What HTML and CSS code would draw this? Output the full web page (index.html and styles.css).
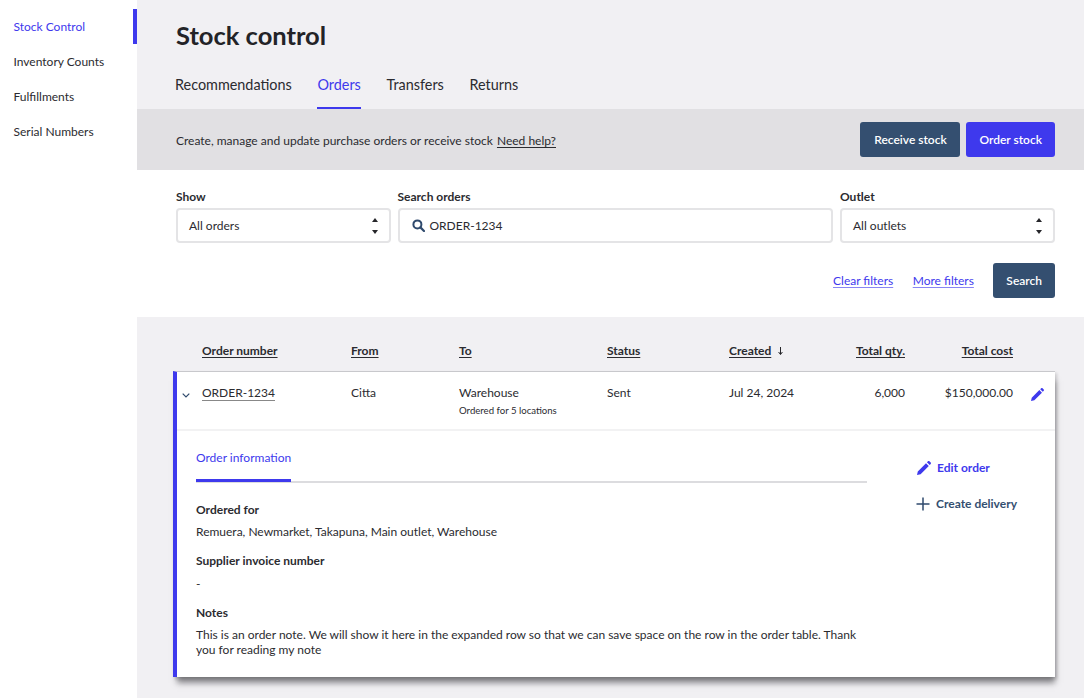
FILE: index.html
```html
<!DOCTYPE html>
<html lang="en">
<head>
<meta charset="utf-8">
<title>Stock control</title>
<link rel="stylesheet" href="styles.css">
</head>
<body>
<div class="app">
  <nav class="sidebar">
    <a class="side-link active">Stock Control</a>
    <a class="side-link">Inventory Counts</a>
    <a class="side-link">Fulfillments</a>
    <a class="side-link">Serial Numbers</a>
  </nav>
  <main class="main">
    <header class="header">
      <h1 class="title">Stock control</h1>
      <div class="tabs">
        <a class="tab">Recommendations</a>
        <a class="tab active">Orders</a>
        <a class="tab">Transfers</a>
        <a class="tab">Returns</a>
      </div>
    </header>
    <section class="banner">
      <p class="banner-text">Create, manage and update purchase orders or receive stock <a class="help">Need help?</a></p>
      <div class="banner-actions">
        <button class="btn navy receive">Receive stock</button>
        <button class="btn blue">Order stock</button>
      </div>
    </section>
    <section class="filters">
      <div class="filter-row">
        <div class="field f-show">
          <label class="label">Show</label>
          <div class="control">All orders
            <svg class="updown" width="8" height="16" viewBox="0 0 8 16"><path d="M4 0l3 4H1zM4 16l-3-4h6z" fill="#26262a"/></svg>
          </div>
        </div>
        <div class="field f-search">
          <label class="label">Search orders</label>
          <div class="control search">
            <svg width="13" height="13" viewBox="0 0 13 13"><circle cx="5.4" cy="5.4" r="4" fill="none" stroke="#2f4a6d" stroke-width="2"/><path d="M8.4 8.4l3.6 3.6" stroke="#2f4a6d" stroke-width="2.2" stroke-linecap="round"/></svg>
            <span>ORDER-1234</span>
          </div>
        </div>
        <div class="field f-outlet">
          <label class="label">Outlet</label>
          <div class="control">All outlets
            <svg class="updown" width="8" height="16" viewBox="0 0 8 16"><path d="M4 0l3 4H1zM4 16l-3-4h6z" fill="#26262a"/></svg>
          </div>
        </div>
      </div>
      <div class="filter-actions">
        <a class="link">Clear filters</a>
        <a class="link">More filters</a>
        <button class="btn navy">Search</button>
      </div>
    </section>
    <section class="orders">
      <div class="grid head">
        <span></span>
        <span><u>Order number</u></span>
        <span><u>From</u></span>
        <span><u>To</u></span>
        <span><u>Status</u></span>
        <span class="created"><u>Created</u>
          <svg width="5" height="8" viewBox="0 0 5 8"><path d="M2.5 0v7M.6 5l1.9 2.6L4.4 5" fill="none" stroke="#26262a" stroke-width="1"/></svg>
        </span>
        <span class="num"><u>Total qty.</u></span>
        <span class="num"><u>Total cost</u></span>
        <span></span>
      </div>
      <div class="card">
        <div class="grid row">
          <span class="chev"><svg width="8" height="5" viewBox="0 0 8 5"><path d="M.7.7L4 4l3.3-3.3" fill="none" stroke="#2f4a6d" stroke-width="1.2"/></svg></span>
          <span><a class="order-link">ORDER-1234</a></span>
          <span>Citta</span>
          <span>Warehouse<small class="sub">Ordered for 5 locations</small></span>
          <span>Sent</span>
          <span>Jul 24, 2024</span>
          <span class="num">6,000</span>
          <span class="num">$150,000.00</span>
          <span class="row-edit"><svg width="13" height="13" viewBox="0 0 14 14"><path d="M0 14l.8-3.6L9 2.2 11.8 5l-8.2 8.2zM9.9 1.3L11 .3c.4-.4 1-.4 1.4 0l1.3 1.3c.4.4.4 1 0 1.4l-1 1.1z" fill="#3e39ed"/></svg></span>
        </div>
        <div class="detail">
          <div class="info">
            <div class="info-tabs"><a class="info-tab">Order information</a></div>
            <h3 class="info-h first">Ordered for</h3>
            <p class="info-p">Remuera, Newmarket, Takapuna, Main outlet, Warehouse</p>
            <h3 class="info-h">Supplier invoice number</h3>
            <p class="info-p">-</p>
            <h3 class="info-h">Notes</h3>
            <p class="info-p">This is an order note. We will show it here in the expanded row so that we can save space on the row in the order table. Thank you for reading my note</p>
          </div>
          <div class="side-actions">
            <a class="act edit"><svg width="14" height="14" viewBox="0 0 14 14"><path d="M0 14l.8-3.6L9 2.2 11.8 5l-8.2 8.2zM9.9 1.3L11 .3c.4-.4 1-.4 1.4 0l1.3 1.3c.4.4.4 1 0 1.4l-1 1.1z" fill="#3e39ed"/></svg>Edit order</a>
            <a class="act create"><svg width="14" height="14" viewBox="0 0 14 14"><path d="M7 .5v13M.5 7h13" stroke="#2f4a6d" stroke-width="1.5" fill="none"/></svg>Create delivery</a>
          </div>
        </div>
      </div>
    </section>
  </main>
</div>
</body>
</html>
```

FILE: styles.css
```css
* { box-sizing: border-box; }
html, body { margin: 0; padding: 0; }
body {
  width: 1084px;
  height: 698px;
  overflow: hidden;
  font-family: Lato, "Open Sans", sans-serif;
  font-size: 12px;
  line-height: 18px;
  color: #2b2b30;
  background: #fff;
}
.app { display: flex; height: 698px; }

.sidebar {
  width: 137px;
  flex: none;
  padding-top: 9px;
  display: flex;
  flex-direction: column;
}
.side-link {
  height: 35px;
  padding-left: 13.5px;
  display: flex;
  align-items: center;
  font-size: 12px;
}
.side-link.active {
  color: #3e39ed;
  border-right: 4px solid #3e39ed;
}

.main { flex: 1; min-width: 0; display: flex; flex-direction: column; }

.header { background: #f1f0f3; height: 109px; padding: 17px 0 0 39px; }
.title {
  margin: 0;
  font-size: 25.5px;
  line-height: 36px;
  font-weight: 700;
  color: #232327;
}
.tabs { display: flex; gap: 25.7px; margin: 14px 0 0 -1px; }
.tab {
  font-size: 14.4px;
  line-height: 22px;
  height: 43px;
  padding-top: 7px;
}
.tab.active { color: #3e39ed; border-bottom: 3px solid #3e39ed; }

.banner {
  background: #e1e0e3;
  height: 61px;
  padding: 0 29px 0 39px;
  display: flex;
  align-items: center;
  justify-content: space-between;
}
.banner-text { margin: 3px 0 0; font-size: 12px; }
.help { text-decoration: underline; margin-left: 1px; text-underline-offset: 2px; }
.banner-actions { display: flex; gap: 6px; }

.btn {
  height: 35px;
  padding: 0 12px;
  border: 1px solid transparent;
  border-radius: 3px;
  font-family: inherit;
  font-size: 12px;
  font-weight: 600;
  color: #fff;
}
.navy { background: #344f70; }
.blue { background: #3e39ed; }
.receive { min-width: 100px; }

.filters { height: 147px; padding: 18px 29px 0 39px; }
.filter-row { display: flex; gap: 6.5px; }
.field { display: flex; flex-direction: column; }
.f-show { width: 215px; }
.f-search { width: 435.5px; }
.f-outlet { width: 215px; margin-left: .5px; }
.label { font-size: 12px; font-weight: 700; line-height: 18px; height: 20px; color: #2b2b30; }
.control {
  height: 35px;
  border: 2px solid #e4e4e6;
  border-radius: 4px;
  padding: 0 10px 0 11px;
  display: flex;
  align-items: center;
  justify-content: space-between;
  background: #fff;
}
.control.search { justify-content: flex-start; gap: 5px; padding-left: 12px; }
.filter-actions {
  display: flex;
  justify-content: flex-end;
  align-items: center;
  gap: 19.5px;
  margin-top: 20px;
}
.link { color: #3e39ed; text-decoration: underline; text-underline-offset: 2px; text-decoration-color: #8885f5; }

.orders { flex: 1; background: #f1f0f3; padding: 0 29px 0 36px; }
.grid { display: grid; }
.head {
  grid-template-columns: 29px 149px 108px 148px 122px 98px 78px 108px 50px;
  height: 54px;
  padding-top: 25px;
  font-weight: 700;
}
.head u { text-underline-offset: 2px; }
.num { text-align: right; }
.created { display: flex; gap: 7px; align-items: center; height: 18px; }
.card {
  background: #fff;
  border-left: 4px solid #3e39ed;
  border-top: 1px solid #c8c8cc;
  box-shadow: 2px 2px 3px rgba(0, 0, 0, .15), 2px 8px 6px -2px rgba(50, 50, 55, .55);
  height: 306px;
}
.row {
  grid-template-columns: 25px 149px 108px 148px 122px 98px 78px 108px 50px;
  height: 59px;
  padding-top: 12px;
  border-bottom: 2px solid #f2f2f3;
}
.chev { padding-top: 5px; padding-left: 5px; line-height: 0; height: 18px; display: flex; align-items: center; }
.order-link { text-decoration: underline; text-decoration-color: #888; text-underline-offset: 3px; }
.sub { display: block; font-size: 9.6px; line-height: 14px; margin-top: 2px; }
.row-edit { padding-left: 18px; padding-top: 4px; line-height: 0; }

.detail { display: flex; padding: 0 0 0 19px; }
.info { width: 671px; }
.info-tabs { border-bottom: 2px solid #dcdcdf; height: 52px; padding-top: 18px; }
.info-tab {
  display: inline-block;
  height: 33px;
  color: #3e39ed;
  border-bottom: 3px solid #3e39ed;
}
.info-h { margin: 13px 0 0; font-size: 12px; line-height: 18px; font-weight: 700; }
.info-h.first { margin-top: 17.5px; }
.info-p { margin: 5.5px 0 0; line-height: 15px; }
.side-actions { padding: 28px 0 0 50px; display: flex; flex-direction: column; gap: 18px; }
.act { display: flex; align-items: center; gap: 6px; font-weight: 700; height: 18px; }
.edit { color: #3e39ed; }
.create { color: #344f70; gap: 6px; margin-left: -1px; }
```
